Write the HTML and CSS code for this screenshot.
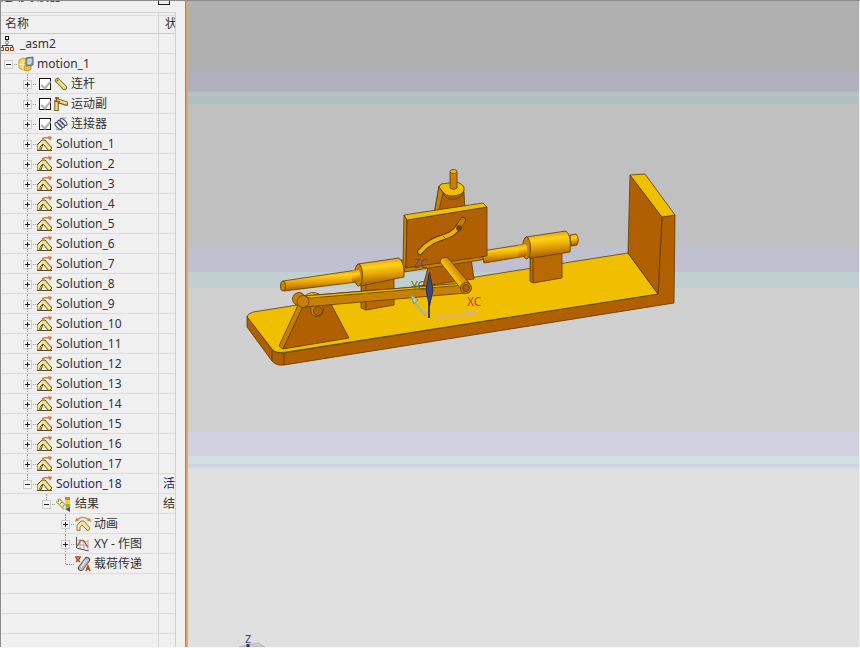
FILE: index.html
```html
<!DOCTYPE html>
<html lang="zh-CN">
<head>
  <meta charset="UTF-8" />
  <meta name="viewport" content="width=device-width, initial-scale=1.0"/>
  <title>运动导航器</title>
  <link rel="stylesheet" href="styles.css">
</head>
<body>

  <!-- icon set -->
  <svg class="symbols" aria-hidden="true">
    <symbol id="i-asm" viewBox="0 0 16 16">
      <path d="M6 4v6M1.500 12V9.500h10V12" fill="none" stroke="#444"/>
      <rect x="4.500" y=".5" width="3" height="3" fill="#fff" stroke="#111"/>
      <circle cx="6" cy="6.500" r="1.500" fill="#eee" stroke="#888"/>
      <path d="M-.5 11.500h3v3h-3zM4.500 11.500h3v3h-3zM9.500 11.500h3v3h-3z" fill="#f8dcc0" stroke="#a04410"/>
    </symbol>
    <symbol id="i-motion" viewBox="0 0 16 16">
      <path d="M1 4l4-2 4 1v10l-4 1-4-2z" fill="#f8d565" stroke="#cf9a30"/>
      <path d="M6 8h7v5l-3 2-4-1z" fill="#f3bd3c" stroke="#c08a24"/>
      <path d="M1 8l4 1 7-1M5 5v9" stroke="#fff3bd" fill="none"/>
      <path d="M8 2l7-1v8l-7 1z" fill="#8fa7b4" stroke="#506a78"/>
      <path d="M10 4l3-1v4l-3 1z" fill="#b9d0da" stroke="#d5e6ee"/>
    </symbol>
    <symbol id="i-link" viewBox="0 0 14 16">
      <path d="M3.500 4.500l7 7" stroke="#6e5a20" stroke-width="5" stroke-linecap="round"/>
      <path d="M3.500 4.500l7 7" stroke="#f0d878" stroke-width="3.400" stroke-linecap="round"/>
      <path d="M4 4l7 7" stroke="#fff6c4"/>
      <circle cx="3.500" cy="4.500" r="1" fill="#8a6d22"/>
    </symbol>
    <symbol id="i-joint" viewBox="0 0 14 16">
      <path d="M2.500 4v11M3 4.500l11 3.500" stroke="#6e5a20" stroke-width="4.500"/>
      <path d="M2.500 4v10M3 4.500l10 3" stroke="#efd87c" stroke-width="2.600"/>
      <path d="M1 2h4M2.500 1v5M1 5l5 1" stroke="#a8481c" stroke-width="1.600"/>
    </symbol>
    <symbol id="i-spring" viewBox="0 0 14 16">
      <g fill="none" stroke="#4a5276" stroke-width="1.200">
        <ellipse cx="4.500" cy="10" rx="2" ry="4.500" transform="rotate(-45 4.500 10)"/>
        <ellipse cx="7" cy="8" rx="2" ry="4.500" transform="rotate(-45 7 8)"/>
        <ellipse cx="9.500" cy="6" rx="2" ry="4.500" transform="rotate(-45 9.500 6)"/>
      </g>
      <path d="M8 2l4 0M2 13l4 1" stroke="#8b93bd"/>
    </symbol>
    <symbol id="i-solution" viewBox="0 0 16 16">
      <path d="M0 14.500V9l5-5h3l7 8-3 3-6-7-3 3v3.500z" fill="#f0dd88" stroke="#5c4c1c"/>
      <path d="M6 6l7 7M2 12V9.500l3-3" fill="none" stroke="#fff6c0"/>
      <path d="M0 14.500h15M6 8l-2 6" fill="none" stroke="#5c4c1c"/>
      <path d="M5 3q3-2 7-1" fill="none" stroke="#d4703c" stroke-width="1.400"/>
      <path d="M11 0l4 1-2 4z" fill="#d4703c"/>
    </symbol>
    <symbol id="i-result" viewBox="0 0 16 16">
      <path d="M1.500 4l8 8" stroke="#8a7840" stroke-width="5"/>
      <path d="M1.500 4l8 8" stroke="#f5e9b4" stroke-width="3.500"/>
      <path d="M3 3l-1 3M6 6l-2 2M8 9l-1 2" stroke="#8a7840"/>
      <path d="M9 1h5v4H9z" fill="#d9822b"/>
      <path d="M9 4h5v4H9z" fill="#f3cf2e"/>
      <path d="M10 8h4v3l-4 1z" fill="#8fae52"/>
      <path d="M9 13l5-2v5z" fill="#3f557f"/>
    </symbol>
    <symbol id="i-anim" viewBox="0 0 16 16">
      <path d="M2 14.500V9l4-4h3l6 7-2 3-6-6-2 2v3.500z" fill="#f7e6a2" stroke="#9a7f3c"/>
      <path d="M2 3.500q6-4 12 0" fill="none" stroke="#dc9454" stroke-width="1.500"/>
      <path d="M0 6l1-4 4 2zM16 6l-1-4-4 2z" fill="#d8813c"/>
    </symbol>
    <symbol id="i-graph" viewBox="0 0 16 16">
      <path d="M5 3v10M9 4v10M13 4v11M1 8l12 2M1 4l12 2" stroke="#aaa" fill="none"/>
      <path d="M1.500 1v11l12 3" stroke="#555" fill="none"/>
      <path d="M2 10c3-2 2-6 5-6s3 4 6 7" stroke="#b4552e" fill="none" stroke-width="1.200"/>
    </symbol>
    <symbol id="i-load" viewBox="0 0 16 16">
      <path d="M6 12l6-8" stroke="#555" stroke-width="6" stroke-linecap="round"/>
      <path d="M6 12l6-8" stroke="#c4c4c4" stroke-width="4" stroke-linecap="round"/>
      <path d="M6 11l5-7" stroke="#f4f4f4"/>
      <path d="M1 2l4 4M5 2L1 6M0 1h6M11 15l2-5 2 5M11 13h4" stroke="#b3441e" stroke-width="1.500" fill="none"/>
    </symbol>
  </svg>

  <div class="app">
    <aside class="navigator">
      <div class="titlebar">
        <span>运动导航器</span>
        <button class="pin" aria-label="pin"></button>
      </div>

      <table class="tree">
        <thead>
          <tr>
            <th class="name">名称</th>
            <th class="state">状</th>
          </tr>
        </thead>
        <tbody id="treeBody"></tbody>
      </table>
    </aside>

    <main class="viewport">
      <svg class="scene" viewBox="188 1 671 646" preserveAspectRatio="xMinYMin meet">
        <defs>
          <linearGradient id="rod" x1="0" y1="0" x2="0.15" y2="1">
            <stop offset="0" stop-color="#d98a00"/>
            <stop offset="0.35" stop-color="#ffd21a"/>
            <stop offset="0.6" stop-color="#eaa800"/>
            <stop offset="1" stop-color="#a45a00"/>
          </linearGradient>
          <linearGradient id="pinShade" x1="0" y1="0.6" x2="0.5" y2="0.2">
            <stop offset="0" stop-color="#d08400"/>
            <stop offset="0.5" stop-color="#f8c40c"/>
            <stop offset="1" stop-color="#c87c00"/>
          </linearGradient>
        </defs>

        <!-- base plate and end wall -->
        <g class="edge">
          <path class="dark" d="M247 316L247 327L272 361Q276 366 284 365L674 303L675 215L662 217L658 294L284 353Q275 353 272 350Z"/>
          <path class="top" d="M247 317Q247 314 253 312L628 253L658 294L286 352Q276 354 272 349L248 318Z"/>
          <path class="dark" d="M630 175L662 217L658 294L628 253Z"/>
          <path class="top" d="M630 175L645 174L675 215L662 217Z"/>
          <path d="M272 350V361M284 353V365"/>
        </g>

        <!-- rear post -->
        <g class="edge">
          <path class="dark" d="M429 264L423 286L474 279L471 258Z"/>
          <path class="dark" d="M439 186L434 215L465 212L464 192Z"/>
          <path class="side" d="M439 186L434 215L438 214L443 193Z"/>
          <path class="top" d="M439 187L441 184L456 182Q465 184 464 190Q463 195 453 196Q445 196 443 192Z"/>
          <path d="M443 193Q446 200 454 199Q464 198 464 190"/>
          <path class="side" d="M450 172V188Q453 191 457 188V172Z"/>
          <ellipse class="top" cx="453.500" cy="171.500" rx="3.500" ry="2"/>
        </g>

        <!-- blocks, sliding rod and bearings -->
        <g class="edge">
          <path class="block" d="M361 282L361 308L366 310L394 305L394 279Z"/>
          <path d="M366 286V310"/>
          <path class="block" d="M530 256L530 281L533 283L562 278L562 252Z"/>
          <path d="M533 258V283"/>
          <path class="side" d="M404 267L487 254V259L404 272Z"/>
          <path class="rod" d="M482 251L526 244V256L484 263Z"/>
          <path class="rod" d="M283 281L357 270V282L284 291Z"/>
          <ellipse class="side" cx="283" cy="286" rx="2.500" ry="5"/>
          <path class="rod" d="M399 260L404 260Q407 266 404 272L399 273Z"/>
          <path class="rod" d="M358 264L399 258Q405 263 404 277L361 286Z"/>
          <ellipse class="side" cx="358.500" cy="275" rx="4" ry="11"/>
          <path class="rod bare" d="M352 270.500L359 270Q362 276 359 281.500L352 282.500Z"/>
          <path class="rod" d="M570 235L576 234Q580 239 577 245L571 246Z"/>
          <path class="rod" d="M526 237L566 231Q572 236 570 252L530 258.500Z"/>
          <ellipse class="side" cx="526.500" cy="248" rx="4" ry="11"/>
          <path class="rod bare" d="M518 245L526 244Q529 250 526 256L518 257.500Z"/>
        </g>

        <!-- cam plate -->
        <g class="edge">
          <path class="side" d="M404 215L407 220L406 268L403 265Z"/>
          <path class="dark" d="M407 220L487 207V256L406 268Z"/>
          <path class="top" d="M404 215L483 203L487 207L407 220Z"/>
          <path class="slot-edge" d="M420 252C430 239 442 239 451 234C459 229 459 225 463 220"/>
          <path class="slot-fill" d="M420 252C430 239 442 239 451 234C459 229 459 225 463 220"/>
          <path class="slot-end" d="M459 227L463 220"/>
          <path d="M443 236L446 239"/>
          <circle class="bolt" cx="459" cy="228" r="2.500"/>
        </g>

        <!-- crank support and connecting link -->
        <g class="edge">
          <path class="side" d="M279 346L299 303L305 304L283 349Z"/>
          <path class="dark" d="M283 349L304 304L331 304L349 338Z"/>
          <path class="top" d="M304 297Q311 289 321 295L324 303L318 308Z"/>
          <circle class="side" cx="317" cy="310" r="6.500"/>
          <circle class="dark" cx="318" cy="311" r="4.500"/>
          <path class="side" d="M302 296L466 283V293L304 307Z"/>
          <path class="top" d="M304 296L464 283V285L310 298Z"/>
          <circle class="side" cx="299" cy="299" r="6.500"/>
          <circle class="side" cx="303" cy="301.500" r="6"/>
          <path class="pin-body" d="M440 262Q441 256 448 258L470 284L461 289Z"/>
          <circle class="side" cx="466" cy="288" r="5.500"/>
          <circle class="dark" cx="466" cy="288" r="3.500"/>
        </g>

        <!-- work coordinate system -->
        <path d="M426 316L414 302" stroke="#a5b4a0" stroke-width="2"/>
        <path d="M410 294L418 300L414 304Z" fill="#b3ccb5" stroke="#6d9284"/>
        <path d="M429 318V290" stroke="#3c4378" stroke-width="2"/>
        <path d="M429.500 272L433 290L429.500 306L426 290Z" fill="#39497f" stroke="#27315e"/>
        <path d="M434 318L468 314" stroke="#e0ae84" stroke-width="2"/>
        <path d="M480 312L466 311V316Z" fill="#dcae8e"/>
        <text class="axis z" x="413" y="268">ZC</text>
        <text class="axis y" x="411" y="290">YC</text>
        <text class="axis x" x="467" y="306">XC</text>

        <!-- view triad -->
        <path d="M248 645l10-2 7 4h-26z" fill="#cfcfcf" stroke="#b4b4b4"/>
        <path d="M248 644v3" stroke="#27315e" stroke-width="3"/>
        <text class="axis triad" x="245" y="643">Z</text>
      </svg>
    </main>
  </div>

  <script>
    const nodes = [
      { depth: -1, icon: 'asm', text: '_asm2' },
      { depth: 0, icon: 'motion', text: 'motion_1', open: true },
      { depth: 1, icon: 'link', text: '连杆', check: true },
      { depth: 1, icon: 'joint', text: '运动副', check: true },
      { depth: 1, icon: 'spring', text: '连接器', check: true }
    ];

    for (let n = 1; n <= 17; n++) {
      nodes.push({ depth: 1, icon: 'solution', text: 'Solution_' + n });
    }

    nodes.push(
      { depth: 1, icon: 'solution', text: 'Solution_18', open: true, last: true, active: true, state: '活' },
      { depth: 2, icon: 'result', text: '结果', open: true, last: true, state: '结' },
      { depth: 3, icon: 'anim', text: '动画' },
      { depth: 3, icon: 'graph', text: 'XY - 作图' },
      { depth: 3, icon: 'load', text: '载荷传递', leaf: true, last: true }
    );

    function renderNode(node, i) {
      let html = '';
      for (let d = 0; d < node.depth; d++) {
        html += '<span class="indent"></span>';
      }
      if (node.depth >= 0) {
        const lines = (node.depth > 0 ? ' up' : '') + (node.depth > 0 && !node.last ? ' down' : '');
        const button = node.leaf ? '' :
          `<button class="toggle ${node.open ? 'open' : ''}" aria-label="${node.text}"></button>`;
        html += `<span class="branch${lines}">${button}</span>`;
      }
      if (node.check) {
        html += `<input type="checkbox" id="node-${i}" checked>`;
      }
      html += `<svg class="icon${node.check ? ' narrow' : ''}"><use href="#i-${node.icon}"/></svg>`;
      html += node.check ? `<label for="node-${i}">${node.text}</label>` : `<span>${node.text}</span>`;
      return `<tr class="${node.active ? 'active' : ''}">
        <td class="name"><div class="node">${html}</div></td>
        <td class="state">${node.state || ''}</td>
      </tr>`;
    }

    const body = document.getElementById('treeBody');
    body.innerHTML = nodes.map(renderNode).join('');

    // empty grid rows below the last node
    for (let n = 0; n < 4; n++) {
      body.insertAdjacentHTML('beforeend', '<tr><td class="name"></td><td class="state"></td></tr>');
    }
  </script>

</body>
</html>
```
FILE: styles.css
```css
* {
  box-sizing: border-box;
}

body {
  margin: 0;
  font-family: "Noto Sans", "Noto Sans CJK SC", sans-serif;
  font-size: 12px;
  color: #333;
  background: #f0f0f0;
}

.symbols {
  display: none;
}

.app {
  display: flex;
  height: 100vh;
  border-top: 1px solid #8c8c8c;
  border-bottom: 1px solid #f8f8f8;
  overflow: hidden;
}

/* navigator */
.navigator {
  flex: 0 0 188px;
  overflow: hidden;
  border-left: 1px solid #8c8c8c;
  border-right: 2px solid #e0a468;
  box-shadow: inset -1px 0 #94877c;
  padding-right: 10px;
}

.titlebar {
  display: flex;
  align-items: flex-end;
  justify-content: space-between;
  height: 11px;
  padding: 0 6px 7px 0;
  line-height: 16px;
  overflow: hidden;
}

.pin {
  width: 12px;
  height: 12px;
  padding: 0;
  border: 1px solid #222;
  background: #f0f0f0;
}

.tree {
  width: 100%;
  table-layout: fixed;
  border-collapse: separate;
  border-spacing: 0;
  border-right: 1px solid #d0d0d0;
}

.tree th,
.tree td {
  height: 20px;
  padding: 1px 0 0;
  border-bottom: 1px solid #dcdcdc;
  font-weight: normal;
  text-align: left;
  line-height: 18px;
  white-space: nowrap;
  overflow: hidden;
}

.tree th {
  height: 22px;
  padding: 2px 0 0 4px;
  border-top: 1px solid #d4d4d4;
  border-bottom-color: #c8c8c8;
  box-shadow: inset 0 2px #f0f0f0, inset 0 3px #dcdcdc;
}

.tree .name {
  width: 158px;
  border-right: 1px solid #d8d8d8;
}

.tree .state {
  padding-left: 4px;
}

.tree th.state {
  padding-left: 6px;
}

.node {
  display: flex;
  align-items: center;
  height: 18px;
}

.active {
  color: #28285e;
}

.indent {
  flex: 0 0 19px;
}

.branch {
  position: relative;
  display: flex;
  align-items: center;
  flex: 0 0 17px;
  height: 20px;
  padding-left: 3px;
}

.branch::before {
  content: "";
  position: absolute;
  left: 7px;
  top: 0;
  border-left: 1px dotted #999;
}

.branch.up::before {
  height: 10px;
}

.branch.down::before {
  height: 20px;
}

.branch::after {
  content: "";
  position: absolute;
  left: 8px;
  right: 1px;
  top: 10px;
  border-top: 1px dotted #999;
}

.toggle {
  position: relative;
  z-index: 1;
  width: 9px;
  height: 9px;
  padding: 0;
  border: 1px solid #ccc;
  background:
    linear-gradient(#222, #222) center / 5px 1px no-repeat,
    linear-gradient(#222, #222) center / 1px 5px no-repeat,
    #f6f6f6;
}

.toggle.open {
  background: linear-gradient(#222, #222) center / 5px 1px no-repeat, #f6f6f6;
}

input[type="checkbox"] {
  appearance: none;
  position: relative;
  flex: 0 0 12px;
  height: 12px;
  margin: 0 3px 0 2px;
  border: 1px solid #111;
  background: #fff;
}

input[type="checkbox"]:checked::after {
  content: "";
  position: absolute;
  left: 3px;
  top: 0;
  width: 4px;
  height: 8px;
  border: solid #b0b0b0;
  border-width: 0 2px 2px 0;
  transform: rotate(40deg);
}

.icon {
  flex: 0 0 16px;
  height: 16px;
  margin-right: 3px;
}

.icon.narrow {
  flex-basis: 14px;
}

/* graphics window */
.viewport {
  flex: 1;
  min-width: 0;
  border-right: 1px solid #f0f0f0;
  background: linear-gradient(
    #b0b0b0 71px,
    #b0b0c0 71px 90px,
    #b0c0c0 90px 92px,
    #c0c0c0 92px 95px,
    #b0c0c0 95px 103px,
    #c0c0c0 103px 247px,
    #c0c0d0 247px 271px,
    #c0d0d0 271px 287px,
    #d0d0d0 287px 431px,
    #d0d0e0 431px 455px,
    #d0e0e0 455px 463px,
    #d0d0e0 463px 466px,
    #d0e0e0 466px 468px,
    #e0e0e0 468px
  );
}

.scene {
  display: block;
  width: 100%;
  height: 100%;
}

.edge path,
.edge circle,
.edge ellipse {
  fill: none;
  stroke: #5a3a08;
  stroke-width: 0.8;
  stroke-linejoin: round;
}

.edge .top {
  fill: #f0c000;
}

.edge .dark {
  fill: #b06000;
}

.edge .side {
  fill: #c88000;
}

.edge .block {
  fill: #b86a00;
}

.edge .rod {
  fill: url(#rod);
}

.edge .bare {
  stroke: none;
}

.edge .pin-body {
  fill: url(#pinShade);
}

.edge .slot-edge,
.edge .slot-fill,
.edge .slot-end {
  stroke-width: 6px;
  stroke-linecap: round;
}

.edge .slot-fill {
  stroke: #f0b400;
  stroke-width: 4px;
}

.edge .slot-end {
  stroke: #c47a00;
  stroke-width: 4px;
}

.edge .bolt {
  fill: #6b4a20;
}

.axis {
  font-size: 12px;
}

.axis.x {
  fill: #c8401c;
}

.axis.y {
  fill: #5c7a28;
}

.axis.z {
  fill: #4a5690;
}

.axis.triad {
  font-size: 11px;
  fill: #3a4490;
}
```
